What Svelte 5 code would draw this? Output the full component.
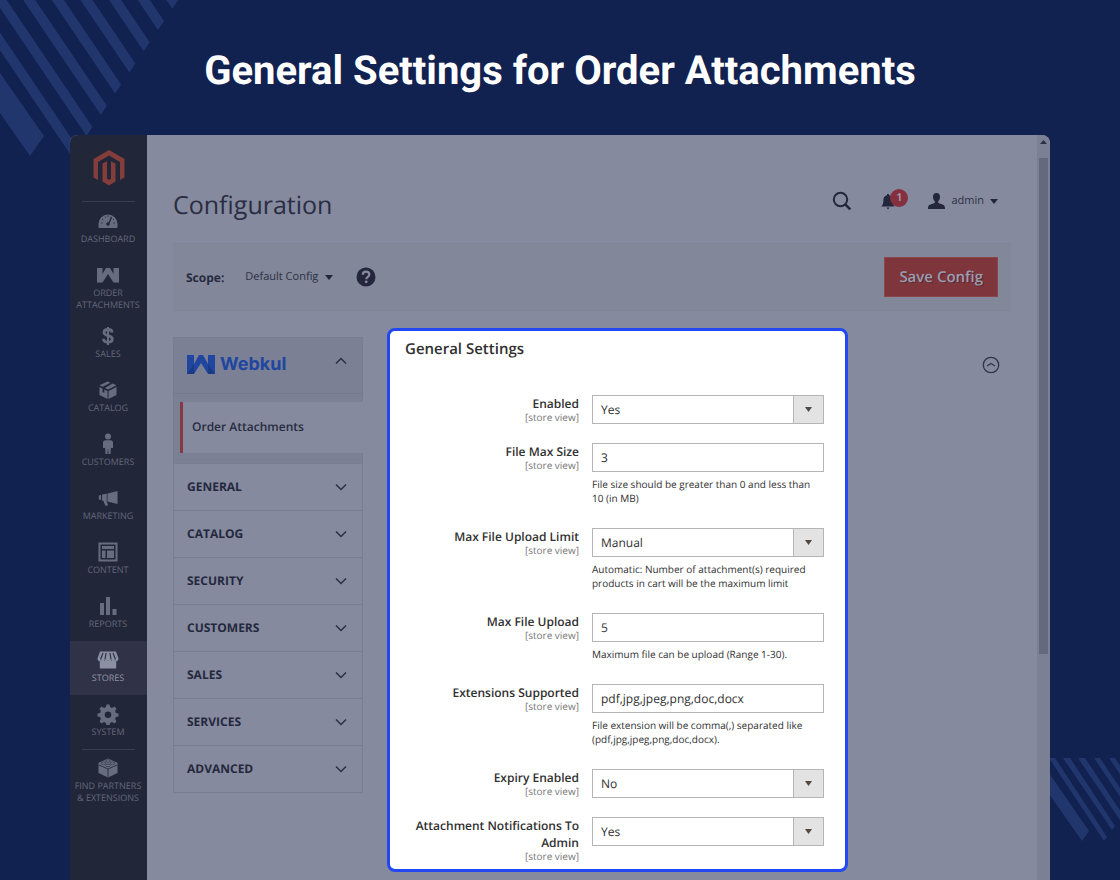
<script>
  const menu = [
    { id: 'dashboard', label: 'Dashboard' },
    { id: 'webkul', label: 'Order Attachments' },
    { id: 'sales', label: 'Sales' },
    { id: 'catalog', label: 'Catalog' },
    { id: 'customers', label: 'Customers' },
    { id: 'marketing', label: 'Marketing' },
    { id: 'content', label: 'Content' },
    { id: 'reports', label: 'Reports' },
    { id: 'stores', label: 'Stores', active: true },
    { id: 'system', label: 'System' },
    { id: 'partners', label: 'Find Partners & Extensions', divided: true }
  ];

  const sections = ['General', 'Catalog', 'Security', 'Customers', 'Sales', 'Services', 'Advanced'];

  const fields = [
    { id: 'enabled', label: 'Enabled', options: ['Yes', 'No'], value: 'Yes' },
    { id: 'max-size', label: 'File Max Size', value: '3', note: 'File size should be greater than 0 and less than 10 (in MB)' },
    { id: 'limit-mode', label: 'Max File Upload Limit', options: ['Manual', 'Automatic'], value: 'Manual', note: 'Automatic: Number of attachment(s) required products in cart will be the maximum limit' },
    { id: 'max-upload', label: 'Max File Upload', value: '5', note: 'Maximum file can be upload (Range 1-30).' },
    { id: 'extensions', label: 'Extensions Supported', value: 'pdf,jpg,jpeg,png,doc,docx', note: 'File extension will be comma(,) separated like (pdf,jpg,jpeg,png,doc,docx).' },
    { id: 'expiry', label: 'Expiry Enabled', options: ['No', 'Yes'], value: 'No' },
    { id: 'notify', label: 'Attachment Notifications To Admin', options: ['Yes', 'No'], value: 'Yes' }
  ];

  const stripes = [-1, 0, 1, 2, 3, 4, 5, 6].map((k) => {
    const x = 164 - 14.3 * k;
    const y = 21 + 21.2 * k;
    return `${x},${y} ${x - 6},${y + 9} ${x - 6 - (y + 39) / 1.48},-30 ${x - (y + 30) / 1.48},-30`;
  });
</script>

<div class="page">
  <svg class="stripes top" width="190" height="180" viewBox="0 0 190 180" aria-hidden="true">
    {#each stripes as points}
      <polygon {points} />
    {/each}
    <polygon points="0,73 44,136 30,156 0,113" />
  </svg>
  <svg class="stripes bottom" width="80" height="90" viewBox="1040 758 80 90" aria-hidden="true">
    <polygon points="1040,760 1089,831 1082,841 1040,781" />
    <polygon points="1049,758 1055,758 1107,837 1104,841" />
    <polygon points="1063,758 1070,758 1115,826 1112,830" />
    <polygon points="1078,758 1085,758 1123,815 1120,820" />
    <polygon points="1094,758 1100,758 1130,803 1127,807" />
    <polygon points="1109,758 1115,758 1130,780 1130,789" />
  </svg>

  <h1>General Settings for Order Attachments</h1>

  <div class="window">
    <nav class="sidebar" aria-label="Main">
      <a class="brand" href="#home" aria-label="Home">
        <svg width="32" height="36" viewBox="0 0 32 36"><path d="M16 0 31.500 9v18.500L27 30V12L16 5.500 5 12v18L.5 27.500V9z" /><path d="M9.500 13.500 14 11.300v17.200l2 1.500 2-1.500V11.300l4.500 2.200v18L16 35.500l-6.500-4z" /></svg>
      </a>
      {#each menu as item}
        <a class="item" class:active={item.active} class:divided={item.divided} href={'#' + item.id}>
          <svg class="glyph" width="22" height="22" viewBox="0 0 22 22" aria-hidden="true">
            {#if item.id === 'dashboard'}
              <path d="M1.500 17v-3a9.500 9.500 0 0 1 19 0v3a1 1 0 0 1-1 1h-17a1 1 0 0 1-1-1z" />
              <g class="cut"><path d="M4 13h1.500M5 9l1.300.8M8 6.500l.7 1.200M11 5.500V7M17 9l-1 1M16.500 13H18" stroke-width=".8" /><path d="m14.500 7-2.500 6" stroke-width="1.300" /><circle cx="11" cy="14" r="1.300" /></g>
            {:else if item.id === 'webkul'}
              <path d="M0 4h5.500v6L9 4h4l3.500 6V4H22v14.500h-5.500L11 10l-5.500 8.500H0z" />
            {:else if item.id === 'sales'}
              <path class="line" stroke-width="2.800" d="M15 7.500C15 5.500 13.500 4.500 11 4.500S7 5.700 7 7.500c0 4 8.300 2.200 8.300 6.500 0 2-1.800 3.200-4.300 3.200S6.500 16 6.500 13.800" /><path d="M10 2h2v18h-2z" />
            {:else if item.id === 'catalog'}
              <path d="m10.500 2.500 3 1.200-8 4-3-1.400zM15.500 4.600l4 1.700-8.500 4.200-3-1.500zM2.500 8l3 1.500v3.500l1.800 1v-3.500l3.200 1.500v8L2.500 16zM19.500 8v8l-8 4v-8z" />
            {:else if item.id === 'customers'}
              <circle cx="11" cy="3.500" r="3" /><path d="M8.500 7.200h5c1.600 0 2.500 1 2.500 2.500V15h-1.800l-.3-1-.4 7h-2l-.3-5h-.4l-.3 5h-2l-.4-7-.3 1H6V9.700c0-1.500.9-2.500 2.500-2.500z" />
            {:else if item.id === 'marketing'}
              <path d="M20.500 4v13l-10-2.500v-8zM5 7.500l4.800-.7v7.400l1.200 4-2.500.7-2.300-5.200-1.200-.3zM1.800 8.500 4 8v5l-2.200-.5z" />
            {:else if item.id === 'content'}
              <path fill-rule="evenodd" d="M1.500 1.500h19v19h-19zm2 2v15h15v-15z" /><path d="M5 5h12v3H5zM5 9.500h3.500V17H5zM10 9.500h7V17h-7z" />
            {:else if item.id === 'reports'}
              <path d="M3 8h4v12H3zM9 2h4v18H9zM15.500 14h4v6h-4z" />
            {:else if item.id === 'stores'}
              <path d="M3 2.500h16l2.500 7c0 3-3 3.500-3.500 1.800-.8 1.700-2.800 1.700-3.500 0-.8 1.700-2.700 1.700-3.500 0-.8 1.700-2.700 1.700-3.500 0-.7 1.700-2.700 1.700-3.500 0C3.500 13 .5 12.500.5 9.500z" /><path d="M2.800 12h16.400v7.500H2.800z" /><path class="cut" d="m6 4-2.500 6.500M9 4l-1 6.500M13 4l1 6.500M16 4l2.500 6.500" stroke-width="1.200" />
            {:else if item.id === 'system'}
              <path fill-rule="evenodd" d="m9.500 1.500h3l.6 2.600 1.900.8 2.400-1.400 2.100 2.100-1.400 2.400.8 1.900 2.600.6v3l-2.600.6-.8 1.900 1.400 2.400-2.100 2.100-2.400-1.400-1.900.8-.6 2.600h-3l-.6-2.600-1.900-.8-2.400 1.400-2.100-2.100 1.400-2.400-.8-1.900-2.600-.6v-3l2.600-.6.800-1.900-1.400-2.400 2.100-2.100L7 4.900l1.900-.8zM11 8.500a3.300 3.300 0 1 0 0 6.600 3.300 3.300 0 0 0 0-6.600z" />
            {:else}
              <path d="m11 1.500 9.500 4.200V16L11 20.500 1.500 16V5.700z" /><path class="cut" d="m2 8 9 4 9-4M11 12v8" stroke-width=".8" /><g class="stud"><ellipse cx="11" cy="4" rx="2.300" ry="1.200" /><ellipse cx="6.500" cy="6.200" rx="2.300" ry="1.200" /><ellipse cx="15.500" cy="6.200" rx="2.300" ry="1.200" /><ellipse cx="11" cy="8.500" rx="2.300" ry="1.200" /></g>
            {/if}
          </svg>
          <span>{item.label}</span>
        </a>
      {/each}
    </nav>

    <main>
      <header>
        <h2>Configuration</h2>
        <div class="actions">
          <button class="plain" aria-label="Search">
            <svg width="20" height="20" viewBox="0 0 20 20"><circle class="ink-line" cx="8.500" cy="8.500" r="6.700" stroke-width="2" /><path class="ink-line" d="m13.300 13.300 5 5" stroke-width="2.600" /></svg>
          </button>
          <button class="plain bell" aria-label="Notifications">
            <svg width="14" height="17" viewBox="0 0 14 17"><path d="M6 1h2v1.200c2.700.6 3.600 2.500 3.600 5 0 3 .6 4.300 2 6.300H.4c1.400-2 2-3.300 2-6.300 0-2.500.9-4.400 3.600-5zM5.500 14.500h3L7 16.500z" /></svg>
            <span class="badge">1</span>
          </button>
          <button class="plain user">
            <svg width="17" height="16" viewBox="0 0 17 16"><path d="M8.500 0c2.300 0 3.500 1.500 3.500 4 0 2-.8 3.300-1.800 4.300v1.500c1 1 5.300 1.500 6.300 3.200.4.700.5 2 .5 3H0c0-1 .1-2.300.5-3 1-1.700 5.300-2.200 6.300-3.200V8.300C5.800 7.300 5 6 5 4c0-2.500 1.200-4 3.500-4z" /></svg>
            <span>admin</span>
            <svg class="caret" width="8" height="5" viewBox="0 0 8 5"><path d="M0 0h8L4 5z" /></svg>
          </button>
        </div>
      </header>

      <div class="scope">
        <strong>Scope:</strong>
        <button class="plain picker">Default Config <svg class="caret" width="8" height="5" viewBox="0 0 8 5"><path d="M0 0h8L4 5z" /></svg></button>
        <button class="plain" aria-label="Help">
          <svg width="20" height="20" viewBox="0 0 20 20"><circle cx="10" cy="10" r="9.500" /><path class="mark" d="M6.800 7.800C6.800 5.800 8 4.700 10 4.700s3.300 1.100 3.300 2.800c0 2.300-3 2.300-3 4.700" /><circle class="dot" cx="10.200" cy="14.800" r="1.400" /></svg>
        </button>
        <button class="save">Save Config</button>
      </div>

      <div class="columns">
        <nav class="tabs" aria-label="Configuration sections">
          <button class="tab webkul" aria-expanded="true">
            <span class="logo">
              <svg width="28" height="20" viewBox="0 0 28 20"><path d="M0 0h7v9l5-9h4l5 9V0h7v19h-7l-7-11-7 11H0z" /><path class="fold" d="m0 19 7-10v10zM28 19 21 9v10z" /></svg>
              Webkul
            </span>
            <svg class="chev" width="12" height="8" viewBox="0 0 12 8"><path d="m1 6.500 5-5 5 5" /></svg>
          </button>
          <div class="open"><a href="#order-attachments">Order Attachments</a></div>
          {#each sections as s}
            <button class="tab" aria-expanded="false">{s}<svg class="chev" width="12" height="8" viewBox="0 0 12 8"><path d="m1 1.500 5 5 5-5" /></svg></button>
          {/each}
        </nav>

        <form class="card">
          <h3>General Settings</h3>
          {#each fields as f}
            <div class="row">
              <label for={f.id}>{f.label}<small>[store view]</small></label>
              <div class="control">
                {#if f.options}
                  <div class="select">
                    <select id={f.id} value={f.value}>
                      {#each f.options as o}<option>{o}</option>{/each}
                    </select>
                    <span class="arrow"><svg width="7" height="5" viewBox="0 0 7 5"><path d="M0 0h7L3.500 5z" /></svg></span>
                  </div>
                {:else}
                  <input id={f.id} type="text" value={f.value} />
                {/if}
                {#if f.note}<p>{f.note}</p>{/if}
              </div>
            </div>
          {/each}
        </form>

        <button class="plain collapse" aria-label="Collapse section">
          <svg width="18" height="18" viewBox="0 0 18 18"><circle cx="9" cy="9" r="7.700" /><path d="m5 10 4-2.500 4 2.500" /></svg>
        </button>
      </div>
    </main>

    <div class="scrollbar" aria-hidden="true">
      <svg width="7" height="4" viewBox="0 0 7 4"><path d="M0 4h7L3.500 0z" /></svg>
      <div class="thumb"></div>
    </div>
  </div>
</div>

<style>
  :global(body) { margin: 0; background: #112150; }
  .page {
    position: relative;
    display: flex;
    flex-direction: column;
    box-sizing: border-box;
    min-height: 100vh;
    padding: 0 70px;
    overflow: hidden;
    background: #112150;
    font-family: "Open Sans", sans-serif;
    text-rendering: geometricPrecision;
    color: #272a3f;
  }
  .page *, .page *::before { box-sizing: border-box; }
  .stripes { position: absolute; fill: #22366e; }
  .top { top: 0; left: 0; }
  .bottom { right: 0; bottom: 32px; }
  h1 {
    position: relative;
    margin: 0;
    padding: 47px 0 40px;
    font: 700 40px/48px Roboto, sans-serif;
    text-align: center;
    color: #fff;
  }
  .window {
    position: relative;
    flex: 1;
    display: flex;
    overflow: hidden;
    border-radius: 8px 8px 0 0;
    background: #858a9e;
  }
  button { font-family: inherit; text-rendering: inherit; cursor: pointer; }
  svg { flex: none; display: block; }

  .sidebar { flex: 0 0 77px; background: #212638; }
  .brand {
    display: flex;
    justify-content: center;
    height: 67px;
    margin: 0 12px;
    padding-top: 15px;
    border-bottom: 1px solid #3a3e50;
  }
  .brand svg { fill: #833e3b; }
  .item {
    display: flex;
    flex-direction: column;
    align-items: center;
    gap: 1px;
    min-height: 54px;
    padding: 8px 1px 6px 0;
    font-size: 9px;
    line-height: 12px;
    text-align: center;
    text-transform: uppercase;
    text-decoration: none;
    color: #64687b;
  }
  .item span { max-width: 72px; }
  .glyph { fill: #686c7f; }
  .line { fill: none; stroke: #686c7f; }
  .cut { fill: #212638; stroke: #212638; }
  path.cut { fill: none; }
  .stud { fill: #747889; stroke: #212638; stroke-width: .6; }
  .active { background: #303347; color: #9095a5; }
  .active .glyph { fill: #8b90a2; }
  .active .cut { stroke: #303347; }
  .divided { position: relative; }
  .divided::before { content: ""; position: absolute; top: 0; left: 12px; right: 12px; border-top: 1px solid #3a3e50; }

  main { flex: 1; min-width: 0; padding: 52px 26px 8px; }
  header { display: flex; justify-content: space-between; align-items: flex-start; height: 56px; }
  h2 { margin: 0; font-size: 25px; line-height: 36px; font-weight: 400; color: #2a2d43; }
  .plain { display: flex; align-items: center; padding: 0; border: 0; background: none; color: #2c3045; font-size: 11px; line-height: 16px; }
  .plain svg { fill: #24273b; }
  .plain .ink-line { fill: none; stroke: #24273b; }
  .actions { display: flex; align-items: center; height: 28px; padding-right: 13px; }
  .bell { position: relative; margin: 0 33px 0 29px; }
  .badge {
    position: absolute;
    left: 9px;
    top: -4px;
    width: 18px;
    height: 18px;
    border-radius: 50%;
    background: #85303f;
    color: #a3a6b5;
    font-size: 11px;
    font-weight: 600;
    line-height: 18px;
  }
  .user { gap: 6px; }
  .scope {
    display: flex;
    align-items: center;
    height: 68px;
    padding: 0 13px;
    border: 1px solid #7e8397;
    border-width: 1px 0;
    background: #828799;
    font-size: 12px;
  }
  .picker { gap: 7px; margin: 0 23px 0 21px; }
  .scope .plain .mark { fill: none; stroke: #858a9e; stroke-width: 2.200; }
  .scope .plain .dot { fill: #858a9e; }
  .save {
    height: 40px;
    margin-left: auto;
    padding: 0 14px;
    border: 1px solid #8c464a;
    background: #7f353c;
    color: #9b9dae;
    font-size: 15px;
    font-weight: 600;
    text-shadow: 1px 1px 0 #5a2c37;
  }

  .columns { display: flex; align-items: flex-start; padding-top: 17px; }
  .tabs { flex: 0 0 190px; margin: 9px 24px 0 0; border: 1px solid #777d92; }
  .tab {
    display: flex;
    align-items: center;
    justify-content: space-between;
    width: 100%;
    height: 47px;
    padding: 0 15px 1px 13px;
    border: 0;
    border-top: 1px solid #777d92;
    background: none;
    color: #24283d;
    font-size: 12px;
    font-weight: 700;
    text-transform: uppercase;
  }
  .webkul { height: 55px; border-top: 0; background: #7b8095; text-transform: none; }
  .logo { display: flex; align-items: center; gap: 5px; color: #21469f; font: 700 18px/24px Inter, sans-serif; }
  .logo svg { fill: #21469f; }
  .logo .fold { fill: #1b3a86; }
  .webkul .chev { margin-bottom: 8px; }
  .chev { fill: none; stroke: #2b2f45; stroke-width: 1.500; }
  .open { padding: 8px 0 10px 6px; border-top: 1px solid #737a8e; background: #7b8095; }
  .open a {
    display: block;
    margin-right: -1px;
    padding: 0 9px 2px;
    border-left: 3px solid #853a43;
    background: #858a9e;
    color: #282c41;
    font-size: 12px;
    font-weight: 600;
    line-height: 49px;
    text-decoration: none;
  }

  .card {
    flex: 0 1 461px;
    padding: 6px 21px 8px 15px;
    border: 3px solid #2148f0;
    border-radius: 8px;
    background: #fff;
    color: #303030;
  }
  h3 { margin: 0 0 34px; font-size: 15px; line-height: 24px; font-weight: 600; }
  .row { display: grid; grid-template-columns: minmax(0, 3fr) minmax(0, 4fr); column-gap: 13px; }
  .row + .row { margin-top: 19px; }
  label { font-size: 12px; line-height: 17px; font-weight: 600; text-align: right; }
  small { display: block; font-size: 10px; line-height: 10px; font-weight: 400; color: #777; }
  input, select {
    display: block;
    width: 100%;
    height: 29px;
    margin: 0;
    padding: 0 8px;
    border: 1px solid #b5b5b5;
    border-radius: 0;
    appearance: none;
    background: #fff;
    color: #303030;
    font: 12px/17px "Open Sans", sans-serif;
    text-rendering: inherit;
  }
  .select { position: relative; }
  .arrow {
    position: absolute;
    inset: 1px 1px 1px auto;
    display: flex;
    align-items: center;
    justify-content: center;
    width: 30px;
    border-left: 1px solid #b5b5b5;
    background: #e3e3e3;
    pointer-events: none;
  }
  .arrow svg { fill: #514943; }
  p { margin: 5px 0 4px; padding-right: 4px; font-size: 10px; line-height: 14px; }
  .collapse { margin: 28px 11px 0 auto; }
  .collapse svg { fill: none; stroke: #2f3449; stroke-width: 1.300; }

  .scrollbar { flex: 0 0 13px; padding: 5px 2px 0; background: #7b8095; }
  .scrollbar svg { margin: 0 auto 14px; fill: #2c3045; }
  .thumb { height: 67%; background: #65697e; }
</style>
